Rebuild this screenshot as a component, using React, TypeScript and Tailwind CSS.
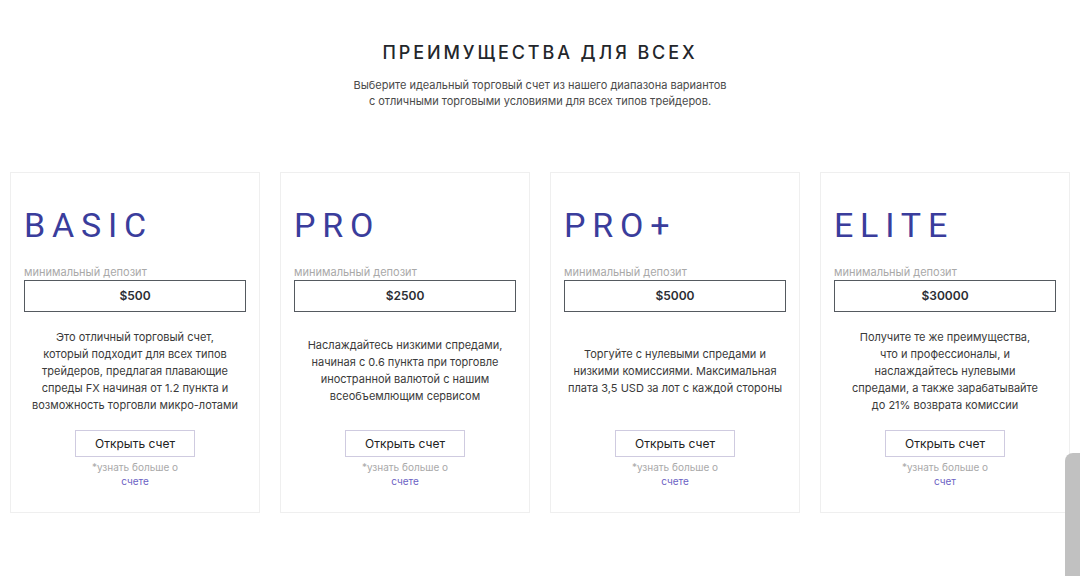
const plans = [
  {
    name: 'BASIC',
    deposit: '$500',
    text: [
      'Это отличный торговый счет,',
      'который подходит для всех типов',
      'трейдеров, предлагая плавающие',
      'спреды FX начиная от 1.2 пункта и',
      'возможность торговли микро-лотами',
    ],
    link: 'счете',
  },
  {
    name: 'PRO',
    deposit: '$2500',
    text: [
      'Наслаждайтесь низкими спредами,',
      'начиная с 0.6 пункта при торговле',
      'иностранной валютой с нашим',
      'всеобъемлющим сервисом',
    ],
    link: 'счете',
  },
  {
    name: 'PRO+',
    deposit: '$5000',
    text: [
      'Торгуйте с нулевыми спредами и',
      'низкими комиссиями. Максимальная',
      'плата 3,5 USD за лот с каждой стороны',
    ],
    link: 'счете',
  },
  {
    name: 'ELITE',
    deposit: '$30000',
    text: [
      'Получите те же преимущества,',
      'что и профессионалы, и',
      'наслаждайтесь нулевыми',
      'спредами, а также зарабатывайте',
      'до 21% возврата комиссии',
    ],
    link: 'счет',
  },
];

const PlanCard = ({ plan }: { plan: (typeof plans)[number] }) => (
  <div className="flex flex-col border border-[#efefef] bg-white px-[13px] pt-[35px] h-[341px]">
    <h3 className="font-['Roboto',sans-serif] text-[34px] leading-[34px] tracking-[0.2em] text-[#3a3d9c]">
      {plan.name}
    </h3>
    <p className="mt-[23px] text-[11px] leading-[14px] text-[#a9a9a9]">минимальный депозит</p>
    <div className="mt-px flex h-[32px] items-center justify-center border border-[#555a60] text-[12px] font-semibold text-[#2a2d33]">
      {plan.deposit}
    </div>
    <div className="flex h-[118px] flex-col items-center justify-center text-center text-[11px] leading-[17px] text-[#3a3a3a]">
      {plan.text.map((line) => (
        <span key={line}>{line}</span>
      ))}
    </div>
    <div className="flex flex-col items-center">
      <button className="h-[27px] w-[120px] border border-[#cfcbe0] bg-white text-[12px] text-[#222]">
        Открыть счет
      </button>
      <span className="mt-[3px] text-[10px] leading-[14px] text-[#a9a9a9]">*узнать больше о</span>
      <a className="text-[10px] leading-[14px] text-[#6b62c4]">{plan.link}</a>
    </div>
  </div>
);

export default function App() {
  return (
    <div className="relative h-[576px] w-[1080px] overflow-hidden bg-white font-['Inter',sans-serif]">
      <div className="flex flex-col items-center pt-[42px]">
        <h2 className="text-[18px] leading-[22px] font-medium tracking-[0.16em] text-[#23262b]">
          ПРЕИМУЩЕСТВА ДЛЯ ВСЕХ
        </h2>
        <p className="mt-[13px] text-center text-[11px] leading-[16px] text-[#4a4a4a]">
          Выберите идеальный торговый счет из нашего диапазона вариантов
          <br />с отличными торговыми условиями для всех типов трейдеров.
        </p>
      </div>
      <div className="mt-[63px] grid grid-cols-4 gap-[20px] px-[10px]">
        {plans.map((p) => (
          <PlanCard key={p.name} plan={p} />
        ))}
      </div>
      <div className="absolute right-0 top-[453px] h-[123px] w-[15px] rounded-tl-[8px] bg-[#c1c1c1]" />
    </div>
  );
}
